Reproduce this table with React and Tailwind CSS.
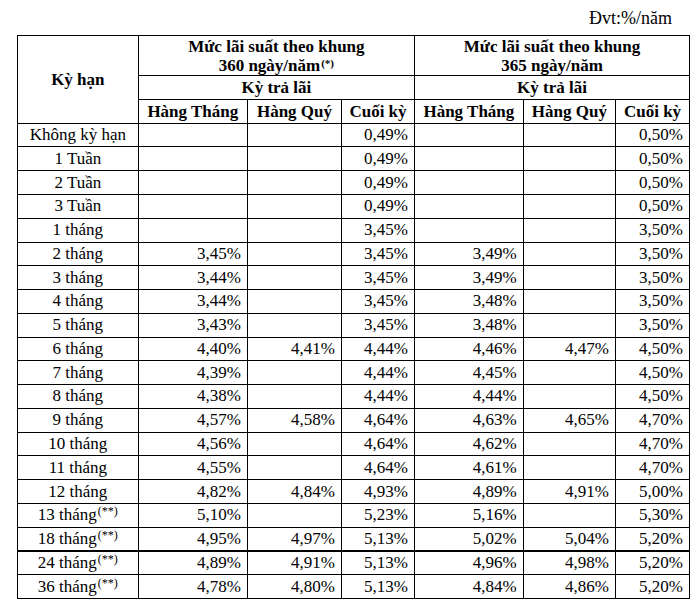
import React from "react";

const rows = [
  ["Không kỳ hạn", "", "", "0,49%", "", "", "0,50%"],
  ["1 Tuần", "", "", "0,49%", "", "", "0,50%"],
  ["2 Tuần", "", "", "0,49%", "", "", "0,50%"],
  ["3 Tuần", "", "", "0,49%", "", "", "0,50%"],
  ["1 tháng", "", "", "3,45%", "", "", "3,50%"],
  ["2 tháng", "3,45%", "", "3,45%", "3,49%", "", "3,50%"],
  ["3 tháng", "3,44%", "", "3,45%", "3,49%", "", "3,50%"],
  ["4 tháng", "3,44%", "", "3,45%", "3,48%", "", "3,50%"],
  ["5 tháng", "3,43%", "", "3,45%", "3,48%", "", "3,50%"],
  ["6 tháng", "4,40%", "4,41%", "4,44%", "4,46%", "4,47%", "4,50%"],
  ["7 tháng", "4,39%", "", "4,44%", "4,45%", "", "4,50%"],
  ["8 tháng", "4,38%", "", "4,44%", "4,44%", "", "4,50%"],
  ["9 tháng", "4,57%", "4,58%", "4,64%", "4,63%", "4,65%", "4,70%"],
  ["10 tháng", "4,56%", "", "4,64%", "4,62%", "", "4,70%"],
  ["11 tháng", "4,55%", "", "4,64%", "4,61%", "", "4,70%"],
  ["12 tháng", "4,82%", "4,84%", "4,93%", "4,89%", "4,91%", "5,00%"],
  ["13 tháng", "5,10%", "", "5,23%", "5,16%", "", "5,30%", true],
  ["18 tháng", "4,95%", "4,97%", "5,13%", "5,02%", "5,04%", "5,20%", true],
  ["24 tháng", "4,89%", "4,91%", "5,13%", "4,96%", "4,98%", "5,20%", true],
  ["36 tháng", "4,78%", "4,80%", "5,13%", "4,84%", "4,86%", "5,20%", true],
];

const th = "border border-black font-bold text-center align-middle p-0 leading-[19px]";
const td = "border border-black p-0 align-middle";

export default function App() {
  return (
    <div
      className="w-[700px] h-[602px] overflow-hidden bg-white text-black text-[17px]"
      style={{ fontFamily: '"Liberation Serif", "Times New Roman", serif' }}
    >
      <div className="h-[35px] flex items-center justify-end pr-[28px] pt-[1px] leading-none text-[18px]">
        Đvt:%/năm
      </div>
      <table className="ml-[17px] border-collapse table-fixed w-[672px]">
        <colgroup>
          <col className="w-[120.7px]" />
          <col className="w-[109.3px]" />
          <col className="w-[94px]" />
          <col className="w-[73px]" />
          <col className="w-[108.7px]" />
          <col className="w-[92.3px]" />
          <col className="w-[74px]" />
        </colgroup>
        <thead>
          <tr className="h-[39.5px]">
            <th rowSpan={3} className={th}>Kỳ hạn</th>
            <th colSpan={3} className={th + " pt-[1px]"}>
              Mức lãi suất theo khung
              <br />
              360 ngày/năm<sup className="text-[11px] leading-none font-bold relative top-[-4px] ml-[1px]">(*)</sup>
            </th>
            <th colSpan={3} className={th + " pt-[1px]"}>
              Mức lãi suất theo khung
              <br />
              365 ngày/năm
            </th>
          </tr>
          <tr className="h-[23.7px]">
            <th colSpan={3} className={th}>Kỳ trả lãi</th>
            <th colSpan={3} className={th}>Kỳ trả lãi</th>
          </tr>
          <tr className="h-[24px]">
            <th className={th}>Hàng Tháng</th>
            <th className={th}>Hàng Quý</th>
            <th className={th}>Cuối kỳ</th>
            <th className={th}>Hàng Tháng</th>
            <th className={th}>Hàng Quý</th>
            <th className={th}>Cuối kỳ</th>
          </tr>
        </thead>
        <tbody>
          {rows.map((r, i) => {
            const thick = i === 18 ? " border-t-2" : "";
            return (
              <tr key={i} className="h-[23.77px] leading-[20px]">
                <td className={td + " text-center" + thick}>
                  {r[0]}
                  {r[7] && (
                    <sup className="text-[12px] leading-none relative top-[-5px] ml-[1px]">(**)</sup>
                  )}
                </td>
                {r.slice(1, 7).map((v, j) => (
                  <td key={j} className={td + " text-right pr-[6px]" + thick}>
                    {v}
                  </td>
                ))}
              </tr>
            );
          })}
        </tbody>
      </table>
      <p className="ml-[17px] mt-[3px] text-[14px] leading-[18px] text-[#333]">
        (*) Lãi suất được tính theo khung 360 ngày/năm.
      </p>
    </div>
  );
}
